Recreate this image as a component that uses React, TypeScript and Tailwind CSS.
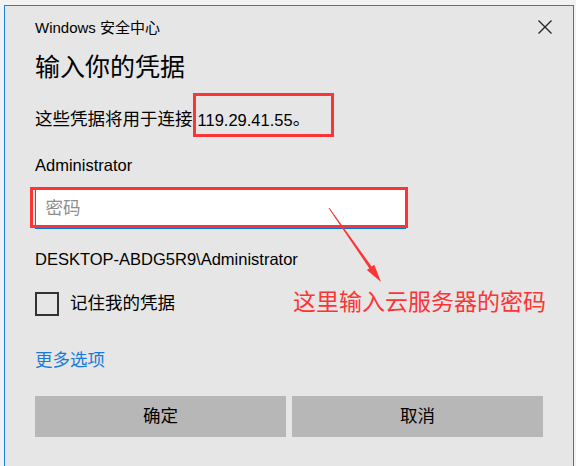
import React from "react";

const font = { fontFamily: '"Liberation Sans", "Noto Sans CJK SC", sans-serif' };

export default function App() {
  return (
    <div
      className="relative w-[576px] h-[466px] overflow-hidden bg-[#f2f2f2] pt-[5px] pl-[4px] pr-[2px] text-black"
      style={font}
    >
      <div className="h-[461px] border-l border-t border-r border-[#1883d7] bg-[#e6e6e6] px-[30px]">
        {/* header */}
        <div className="flex h-[42px] items-center justify-between">
          <span className="text-[15px] leading-none">Windows 安全中心</span>
          <svg width="16" height="16" viewBox="0 0 16 16" className="-mr-[10px]">
            <path d="M1.5 1.5 L14.5 14.5 M14.5 1.5 L1.5 14.5" stroke="#222" strokeWidth="1.3" fill="none" />
          </svg>
        </div>
        {/* title */}
        <div className="flex h-[38px] items-center text-[25px] leading-none">输入你的凭据</div>
        {/* body */}
        <div className="mt-[14px] flex h-[40px] items-center text-[17.5px] leading-none">
          <span>这些凭据将用于连接</span>
          <span className="ml-[5px] text-[16.5px]">119.29.41.55</span>
          <span>。</span>
        </div>
        <div className="mt-[10px] flex h-[30px] items-center text-[16.5px] leading-none">Administrator</div>
        {/* input */}
        <div className="mt-[9px] flex h-[40px] w-[371px] -ml-[0.5px] items-center border border-[#0078d7] bg-white pl-[10px] text-[17.5px] leading-none text-[#8e8e8e]">
          密码
        </div>
        <div className="mt-[15px] flex h-[30px] items-center text-[16.5px] leading-none">
          DESKTOP-ABDG5R9\Administrator
        </div>
        {/* checkbox */}
        <div className="mt-[15px] flex h-[30px] items-center gap-[11px]">
          <div className="h-[24px] w-[24px] border-2 border-[#333]" />
          <span className="text-[17.5px] leading-none">记住我的凭据</span>
        </div>
        <div className="mt-[27px] flex h-[30px] items-center text-[17.5px] leading-none text-[#1a7bd6]">更多选项</div>
        {/* buttons */}
        <div className="mt-[20px] grid h-[41px] grid-cols-2 gap-[6px]">
          <div className="flex items-center justify-center bg-[#b7b7b7] text-[17.5px] leading-none">确定</div>
          <div className="flex items-center justify-center bg-[#b7b7b7] text-[17.5px] leading-none">取消</div>
        </div>
      </div>

      {/* annotation overlays */}
      <div className="pointer-events-none absolute left-[193px] top-[93px] h-[44px] w-[141px] border-[3px] border-[#fb3535]" />
      <div className="pointer-events-none absolute left-[30px] top-[187px] h-[41px] w-[378px] border-[3px] border-[#fb3535]" />
      <svg className="pointer-events-none absolute left-0 top-0" width="576" height="466" viewBox="0 0 576 466">
        <polygon points="328.6,208.3 329.4,207.7 372,267 369.6,268.7" fill="#fb3535" />
        <polygon points="381,282 366.9,269.9 374.3,264.7" fill="#fb3535" />
      </svg>
      <div className="pointer-events-none absolute left-[293px] top-[288px] flex h-[28px] items-center text-[23px] leading-none text-[#fb3535]">
        这里输入云服务器的密码
      </div>
    </div>
  );
}
